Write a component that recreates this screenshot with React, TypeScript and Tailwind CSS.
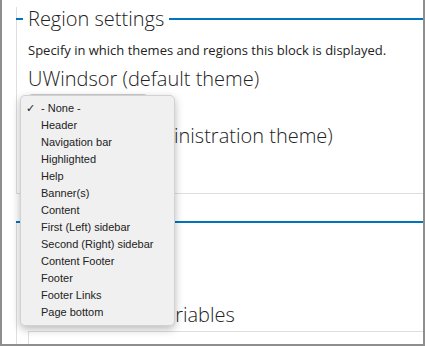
const regions = [
  "Header",
  "Navigation bar",
  "Highlighted",
  "Help",
  "Banner(s)",
  "Content",
  "First (Left) sidebar",
  "Second (Right) sidebar",
  "Content Footer",
  "Footer",
  "Footer Links",
  "Page bottom",
];

function RegionMenu() {
  return (
    <div className="absolute left-[18px] top-[95px] w-[155px] rounded-[5px] border border-[#d2d2d2] bg-[#f0f0f0] py-[4px] font-['Liberation_Sans',sans-serif] text-[11px] text-[#222] shadow-[0_3px_9px_rgba(0,0,0,0.28)]">
      <div className="relative h-[17px] pl-[20px] leading-[17px]">
        <span className="absolute left-[5px] top-0 font-['DejaVu_Sans',sans-serif] text-[11px]">✓</span>
        - None -
      </div>
      {regions.map((r) => (
        <div key={r} className="h-[17px] pl-[20px] leading-[17px]">
          {r}
        </div>
      ))}
    </div>
  );
}

export default function App() {
  return (
    <div className="relative h-[346px] w-[425px] overflow-hidden border-x-2 border-b-2 border-[#8e8e8e] bg-white font-['Open_Sans',sans-serif] text-[#222]">
      <div className="ml-[14px] mt-[19px] border-b border-l border-[#dedede] pb-[13px] pl-[11px]">
        <div className="-ml-[12px] -mt-[12px] flex h-[24px] items-center">
          <span className="h-[2px] w-[7px] bg-[#0074bd]" />
          <span className="px-[5px] text-[20px] font-light leading-[24px]">Region settings</span>
          <span className="h-[2px] flex-1 bg-[#0074bd]" />
        </div>
        <p className="mt-[10px] text-[13px] leading-[18px]">
          Specify in which themes and regions this block is displayed.
        </p>
        <h3 className="mt-[8px] text-[20px] font-light leading-[24px]">UWindsor (default theme)</h3>
        <div className="my-[3px] h-[27px] w-[120px] rounded border border-[#ccc]" />
        <h3 className="text-[20px] font-light leading-[24px]">Adminimal (administration theme)</h3>
        <div className="mt-[4px] h-[28px] w-[120px] rounded border border-[#ccc]" />
      </div>

      <div className="ml-[14px] mt-[28px] h-[200px] border-l border-[#dedede] pl-[11px]">
        <div className="-ml-[12px] -mt-px h-[2px] bg-[#0074bd]" />
        <h3 className="mt-[80px] text-[20px] font-light leading-[24px]">Custom block variables</h3>
        <div className="mt-[4px] h-[40px] border-l border-t border-[#dedede]" />
      </div>

      <RegionMenu />
    </div>
  );
}
